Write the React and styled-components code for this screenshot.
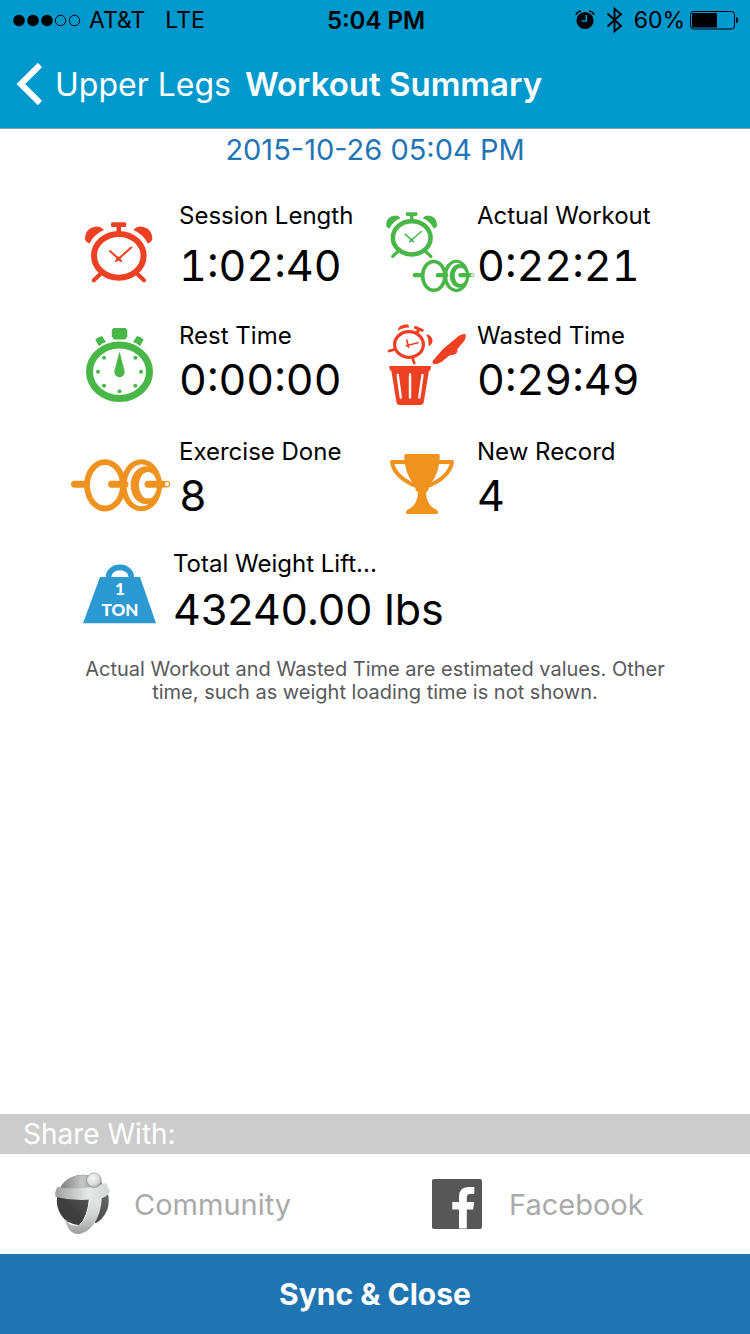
import React from 'react'
import styled, { createGlobalStyle } from 'styled-components'

const RED = '#ee4023'
const GREEN = '#49b748'
const ORANGE = '#f0921e'
const BLUE = '#2d99d3'

const GlobalStyle = createGlobalStyle`
* {
box-sizing:border-box;
}
body {
margin:0;
background-color:#fff;
font-family:Inter, "Liberation Sans", sans-serif;
}
`
const Page = styled.div`
display:flex;
flex-direction:column;
min-height:100vh;
`
const Header = styled.header`
background-color:#0099cd;
border-bottom:1px solid #8a9ea6;
`
const StatusBar = styled.div`
display:grid;
grid-template-columns:1fr auto 1fr;
align-items:center;
height:40px;
padding:0 11px 0 13px;
font-size:23px;
color:#000;
`
const StatusSide = styled.div`
display:flex;
align-items:center;
justify-content:${props => props.$end ? 'flex-end' : 'flex-start'};
gap:${props => props.$end ? 5 : 8}px;
`
const Network = styled.span`
margin-left:12px;
`
const Clock = styled.span`
font-size:24px;
font-weight:600;
`
const NavBar = styled.nav`
display:flex;
align-items:center;
gap:14px;
height:88px;
padding:0 16px;
color:#fff;
`
const BackButton = styled.button`
display:flex;
align-items:center;
gap:12px;
border:0;
padding:0;
background:none;
color:inherit;
font-family:inherit;
font-size:32px;
cursor:pointer;
`
const Title = styled.h1`
margin:0;
font-size:33px;
font-weight:600;
`
const Main = styled.main`
flex:1;
`
const SessionDate = styled.div`
padding-top:4px;
font-size:29px;
line-height:34px;
text-align:center;
color:#1f75b5;
`
const Metrics = styled.div`
display:grid;
grid-template-columns:1fr 1fr;
grid-template-rows:120px 116px 112px 110px;
margin:33px 83px 0 71px;
`
const MetricItem = styled.div`
display:grid;
grid-template-columns:${props => props.$wide ? '102px' : '108px'} 1fr;
grid-column:${props => props.$wide ? 'span 2' : 'auto'};
align-items:start;
`
const MetricText = styled.div`
display:flex;
flex-direction:column;
gap:${props => props.$gap || 0}px;
white-space:nowrap;
color:#000;
`
const MetricLabel = styled.span`
font-size:24px;
line-height:32px;
`
const MetricValue = styled.span`
font-size:43px;
line-height:55px;
font-variant-numeric:${props => props.$wide ? 'normal' : 'tabular-nums'};
`
const Note = styled.p`
margin:0 72px;
font-size:20px;
line-height:23px;
text-align:center;
color:#58595b;
`
const ShareTitle = styled.h2`
margin:0;
padding:0 23px;
background-color:#ccc;
color:#fff;
font-size:28px;
font-weight:400;
line-height:40px;
`
const ShareRow = styled.div`
display:grid;
grid-template-columns:1fr 1fr;
`
const ShareButton = styled.button`
display:flex;
align-items:center;
gap:24px;
height:100px;
border:0;
padding:0 54px;
background-color:#fff;
color:#aaa;
font-family:inherit;
font-size:29px;
cursor:pointer;
`
const SyncButton = styled.button`
display:block;
width:100%;
height:80px;
border:0;
background-color:#1f74b2;
color:#fff;
font-family:inherit;
font-size:30px;
font-weight:700;
cursor:pointer;
`

function SignalDots(){
    return(
        <svg width="68" height="14" viewBox="1 0 68 14" aria-hidden="true">
            <circle cx="7" cy="7.5" r="5.8"/>
            <circle cx="21" cy="7.5" r="5.8"/>
            <circle cx="35" cy="7.5" r="5.8"/>
            <circle cx="48.5" cy="7.5" r="5.2" fill="none" stroke="#000"/>
            <circle cx="62.5" cy="7.5" r="5.2" fill="none" stroke="#000"/>
        </svg>
    )
}

function StatusIcons(){
    return(
        <svg width="54" height="28" viewBox="0 0 54 28" aria-hidden="true">
            <circle cx="10" cy="14.5" r="8.6"/>
            <path d="M1 9 Q2 5.5 6 5 M19 9 Q18 5.5 14 5" fill="none" stroke="#000" strokeWidth="1.6"/>
            <path d="M11.3 9 V15 H6.5" fill="none" stroke="#0099cd" strokeWidth="1.6"/>
            <path d="M32.5 7.5 L46 20 L39.5 25.2 V2.8 L46 8.3 L32.5 20.5" fill="none" stroke="#000" strokeWidth="1.9"/>
        </svg>
    )
}

function Battery(){
    return(
        <svg width="49" height="20" viewBox="1 0 49 20" aria-hidden="true">
            <rect x="1.5" y="1.5" width="44" height="17.5" rx="3" fill="none" stroke="#000"/>
            <rect x="3" y="3" width="25" height="14.5" rx="1"/>
            <path d="M47 7 Q49.2 7.5 49.2 10.3 Q49.2 13 47 13.5Z"/>
        </svg>
    )
}

function BackArrow(){
    return(
        <svg width="27" height="44" viewBox="0 0 27 44" aria-hidden="true">
            <path d="M24 3 L4.8 22 L24 41" fill="none" stroke="#fff" strokeWidth="6"/>
        </svg>
    )
}

function MetricIcon({ children }){
    return <svg width="108" height="96" viewBox="0 0 108 96" aria-hidden="true">{children}</svg>
}

function AlarmShape({ color }){
    return(
        <g fill="none" stroke={color} strokeLinecap="round">
            <ellipse cx="47.8" cy="55.8" rx="24.8" ry="21.9" strokeWidth="6"/>
            <rect x="40" y="22.3" width="15.3" height="4.8" rx="1.5" fill={color} stroke="none"/>
            <path d="M47.8 26 V32" strokeWidth="4.6" strokeLinecap="butt"/>
            <path d="M14 39.5 Q14 27 27 26.5 Q31 27 33 30 Q23 34 18.5 43.5 Q15 42.5 14 39.5Z" fill={color} stroke="none"/>
            <path d="M81.3 39.5 Q81.3 27 68.3 26.5 Q64.3 27 62.3 30 Q72.3 34 76.8 43.5 Q80.3 42.5 81.3 39.5Z" fill={color} stroke="none"/>
            <path d="M31 72.5 L22.8 80.3 M64.8 72.5 L73 80.3" strokeWidth="4.2"/>
            <path d="M39 51 L50 61 M45 61 L60.3 47.5" strokeWidth="2"/>
            <circle cx="47.5" cy="58.8" r="2.2" fill={color} stroke="none"/>
        </g>
    )
}

function BarbellShape({ color }){
    return(
        <g fill="none" stroke={color}>
            <path d="M3.5 48.2 H15" strokeWidth="7" strokeLinecap="round"/>
            <ellipse cx="34" cy="49.3" rx="18" ry="23.2" strokeWidth="5.8"/>
            <ellipse cx="70.3" cy="49.3" rx="20.6" ry="26" fill={color} stroke="none"/>
            <ellipse cx="70.5" cy="49.3" rx="15" ry="21" fill="#fff" stroke="none"/>
            <ellipse cx="75.2" cy="49.3" rx="15.6" ry="19" fill={color} stroke="none"/>
            <ellipse cx="77" cy="49.3" rx="9.2" ry="13.2" fill="#fff" stroke="none"/>
            <path d="M40.5 48.2 H54 M77 48.2 H92" strokeWidth="7" strokeLinecap="round"/>
            <circle cx="96" cy="48.2" r="2.7" fill="#fff" strokeWidth="1.2"/>
        </g>
    )
}

function SessionIcon(){
    return <MetricIcon><AlarmShape color={RED}/></MetricIcon>
}

function WorkoutIcon(){
    return(
        <MetricIcon>
            <g transform="translate(6.4 -4.6) scale(.76)"><AlarmShape color={GREEN}/></g>
            <g transform="translate(43.7 45.3) scale(.62)"><BarbellShape color={GREEN}/></g>
        </MetricIcon>
    )
}

function RestIcon(){
    return(
        <MetricIcon>
            <g fill={GREEN}>
                <ellipse cx="48.5" cy="51.7" rx="30" ry="26.7" fill="none" stroke={GREEN} strokeWidth="7"/>
                <path d="M42.5 8 H54.5 L56.3 10 V16.5 L54 19.6 H43 L40.8 16.5 V10Z"/>
                <path d="M24.3 19.5 Q27 16.5 31 16 L35 22 Q31 23 28 26.3Z"/>
                <path d="M72.7 19.5 Q70 16.5 66 16 L62 22 Q66 23 69 26.3Z"/>
                <path d="M48.5 31.5 L53.6 51 A5.2 5.2 0 1 1 43.4 51Z"/>
                <circle cx="33" cy="37.7" r="2"/>
                <circle cx="64.3" cy="37.7" r="2"/>
                <circle cx="27" cy="51.7" r="2"/>
                <circle cx="70" cy="51.7" r="2"/>
                <circle cx="33" cy="65.7" r="2"/>
                <circle cx="64.3" cy="65.7" r="2"/>
                <circle cx="48.5" cy="71.3" r="2"/>
            </g>
        </MetricIcon>
    )
}

function WastedIcon(){
    return(
        <MetricIcon>
            <g fill="none" stroke={RED} strokeLinecap="round">
                <ellipse cx="40" cy="24.5" rx="14.4" ry="12.8" strokeWidth="3.2"/>
                <path d="M46.5 7.5 L53.3 10.3 M49.8 9.5 L48 13" strokeWidth="3"/>
                <path d="M20 31 L25 29.6 M43.8 39 L45.3 43" strokeWidth="2.8"/>
                <path d="M37.8 20 L39.5 27.3 M37.3 25.8 L49 22.8" strokeWidth="1.6"/>
                <path d="M28.5 11 Q29 5 37.5 4.2 Q40.5 5 40 7.5 Q33 7.5 28.5 11Z" fill={RED} stroke="none"/>
                <path d="M57 14.3 Q62.5 15 63.5 20 Q63.5 25 59.5 26 Q60 19 57 14.3Z" fill={RED} stroke="none"/>
                <path d="M64 40.5 L74 29 L90 15.8 Q94 13.5 96.7 14.3 Q97.5 17 95.5 20.5 L88.3 29.3 Q89 33 85.5 34.5 L80.3 35.5 L72.5 42 Q68 44.6 65 44.3 Q62.5 43 64 40.5Z" fill={RED} stroke="none"/>
                <path d="M20.3 46 H62 L61.5 50.5 H60 L54.7 82.5 Q54 85 51 85 H31 Q28 85 27.5 82.5 L22.3 50.5 H20.8Z" fill={RED} stroke="none"/>
                <path d="M28.7 55 L31.8 77.5 M41 54.5 V77.5 M53.5 55 L50.3 77.5" stroke="#fff" strokeWidth="2.4"/>
            </g>
        </MetricIcon>
    )
}

function ExerciseIcon(){
    return <MetricIcon><BarbellShape color={ORANGE}/></MetricIcon>
}

function RecordIcon(){
    return(
        <MetricIcon>
            <path d="M37 26 H23 Q25 41 48 50.5 M69 26 H83 Q81 41 58 50.5" fill="none" stroke={ORANGE} strokeWidth="4" strokeLinejoin="round"/>
            <path d="M37 18 H69 Q71 18 70.8 20 Q70 41 58.5 50.5 L59.5 52 V54 L57 56.5 Q57.5 68 65 72.5 Q69.5 74 69 77 Q69 78 67.5 78 H38.5 Q37 78 37 77 Q36.5 74 41 72.5 Q48.5 68 49 56.5 L46.5 54 V52 L47.5 50.5 Q36 41 35.2 20 Q35 18 37 18Z" fill={ORANGE}/>
        </MetricIcon>
    )
}

const TonText = styled.text`
font-family:Lato, sans-serif;
font-size:17px;
font-weight:900;
text-anchor:middle;
fill:#fff;
`

function WeightIcon(){
    return(
        <svg width="102" height="96" viewBox="0 0 102 96" aria-hidden="true">
            <path d="M37.5 31 V29 A11.3 9.5 0 0 1 60.3 29 V31" fill="none" stroke={BLUE} strokeWidth="5.6"/>
            <path d="M29 29 H69 L85 75.3 H12Z" fill={BLUE}/>
            <TonText x="49" y="47">1</TonText>
            <TonText x="49" y="68">TON</TonText>
        </svg>
    )
}

function CommunityIcon(){
    return(
        <svg width="56" height="64" viewBox="0 0 56 64" aria-hidden="true">
            <defs>
                <linearGradient id="globeTop" x1="0" y1="0" x2="1" y2="0">
                    <stop offset="0" stopColor="#777"/>
                    <stop offset=".5" stopColor="#c4c4c4"/>
                    <stop offset="1" stopColor="#888"/>
                </linearGradient>
                <linearGradient id="globeBase" x1="0" y1="1" x2="1" y2="0">
                    <stop offset=".3" stopColor="#3e3e3e"/>
                    <stop offset="1" stopColor="#777"/>
                </linearGradient>
                <linearGradient id="band" x1="0" y1="0" x2="1" y2="0">
                    <stop offset="0" stopColor="#a0a0a0"/>
                    <stop offset=".6" stopColor="#e6e8e7"/>
                    <stop offset="1" stopColor="#d4d6d5"/>
                </linearGradient>
                <linearGradient id="strap" x1="0" y1="0" x2="0" y2="1">
                    <stop offset="0" stopColor="#e8eae9"/>
                    <stop offset=".5" stopColor="#d0d2d1"/>
                    <stop offset="1" stopColor="#9c9c9c"/>
                </linearGradient>
                <radialGradient id="ball" cx=".4" cy=".35" r=".7">
                    <stop offset="0" stopColor="#f6f7f6"/>
                    <stop offset=".6" stopColor="#dcdedd"/>
                    <stop offset="1" stopColor="#a4a4a4"/>
                </radialGradient>
            </defs>
            <circle cx="28.8" cy="28.8" r="26" fill="url(#globeBase)"/>
            <path d="M4 20 Q11 3 28.8 3 Q46 3 52 18 Q28 24 4 20Z" fill="url(#globeTop)"/>
            <path d="M26 53 L24 58 H40 L41.5 51 L34 42Z" fill="#fff"/>
            <path d="M47.7 25 C47.5 43 39 60 24.5 62 Q13.5 61.5 11 46.7 Q16 54 25.5 53.2 Q34 45 35.5 26Z" fill="url(#strap)"/>
            <path d="M25.5 53.2 Q34 45 35.5 26" fill="none" stroke="#f4f4f4"/>
            <path d="M13.5 49.5 Q18 55.5 25.5 53.2 Q19 52.8 13.5 49.5Z" fill="#fff"/>
            <path d="M3.5 15 Q28 19.5 52 11 L56 19 Q54 24 48.5 26 Q25 30.5 1.5 25 Q.5 19 3.5 15Z" fill="url(#band)"/>
            <circle cx="40" cy="8.3" r="7.3" fill="url(#ball)" stroke="#777" strokeWidth=".5"/>
        </svg>
    )
}

function FacebookIcon(){
    return(
        <svg width="56" height="50" viewBox="0 0 56 50" aria-hidden="true">
            <rect x="3" width="50" height="50" rx="2" fill="#575757"/>
            <path d="M30 49.5 V30.5 H23.3 V23 H30 V18 Q30 8 39.5 8 H45.3 V15 H41 Q37.8 15 37.8 18.5 V23 H45.2 L44.2 30.5 H37.8 V49.5Z" fill="#fff"/>
        </svg>
    )
}

function Metric({ icon, label, value, gap, wide }){
    return(
        <MetricItem $wide={wide}>
            {icon}
            <MetricText $gap={gap}>
                <MetricLabel>{label}</MetricLabel>
                <MetricValue $wide={wide}>{value}</MetricValue>
            </MetricText>
        </MetricItem>
    )
}

function App(){
    return(
        <Page>
            <GlobalStyle/>
            <Header>
                <StatusBar>
                    <StatusSide>
                        <SignalDots/>
                        <span>AT&amp;T</span>
                        <Network>LTE</Network>
                    </StatusSide>
                    <Clock>5:04 PM</Clock>
                    <StatusSide $end>
                        <StatusIcons/>
                        <span>60%</span>
                        <Battery/>
                    </StatusSide>
                </StatusBar>
                <NavBar>
                    <BackButton type="button"><BackArrow/>Upper Legs</BackButton>
                    <Title>Workout Summary</Title>
                </NavBar>
            </Header>

            <Main>
                <SessionDate>2015-10-26 05:04 PM</SessionDate>
                <Metrics>
                    <Metric icon={<SessionIcon/>} label="Session Length" value="1:02:40" gap={6}/>
                    <Metric icon={<WorkoutIcon/>} label="Actual Workout" value="0:22:21" gap={6}/>
                    <Metric icon={<RestIcon/>} label="Rest Time" value="0:00:00"/>
                    <Metric icon={<WastedIcon/>} label="Wasted Time" value="0:29:49"/>
                    <Metric icon={<ExerciseIcon/>} label="Exercise Done" value="8"/>
                    <Metric icon={<RecordIcon/>} label="New Record" value="4"/>
                    <Metric icon={<WeightIcon/>} label="Total Weight Lift..." value="43240.00 lbs" gap={2} wide/>
                </Metrics>
                <Note>
                    Actual Workout and Wasted Time are estimated values. Other
                    time, such as weight loading time is not shown.
                </Note>
            </Main>

            <footer>
                <ShareTitle>Share With:</ShareTitle>
                <ShareRow>
                    <ShareButton type="button"><CommunityIcon/>Community</ShareButton>
                    <ShareButton type="button"><FacebookIcon/>Facebook</ShareButton>
                </ShareRow>
                <SyncButton type="button">Sync &amp; Close</SyncButton>
            </footer>
        </Page>
    )
}

export default App
